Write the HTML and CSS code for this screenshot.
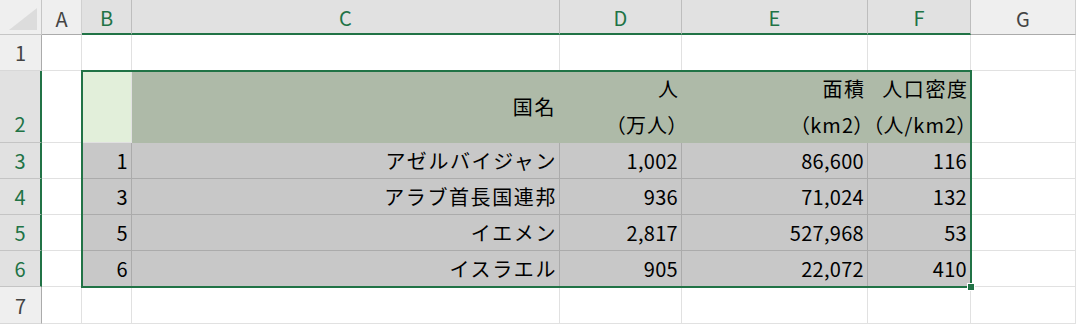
FILE: index.html
```html
<!DOCTYPE html>
<html lang="ja">
<head>
    <meta charset="UTF-8">
    <title>Sheet1</title>
    <link rel="stylesheet" href="styles.css">
</head>
<body>
    <div class="sheet">
        <!-- column headers -->
        <div class="corner"><span class="tri"></span></div>
        <div class="colhead">A</div>
        <div class="colhead on">B</div>
        <div class="colhead on">C</div>
        <div class="colhead on">D</div>
        <div class="colhead on">E</div>
        <div class="colhead on">F</div>
        <div class="colhead">G</div>

        <!-- row 1 -->
        <div class="rowhead">1</div>
        <div class="cell"></div>
        <div class="cell"></div>
        <div class="cell"></div>
        <div class="cell"></div>
        <div class="cell"></div>
        <div class="cell"></div>
        <div class="cell"></div>

        <!-- row 2 -->
        <div class="rowhead on tall">2</div>
        <div class="cell"></div>
        <div class="cell corner-cell"></div>
        <div class="cell head mid jp">国名</div>
        <div class="cell head"><span class="jp">人</span><span class="unit">（万人）</span></div>
        <div class="cell head"><span class="jp">面積</span><span class="unit">（km2）</span></div>
        <div class="cell head"><span class="jp">人口密度</span><span class="unit">（人/km2）</span></div>
        <div class="cell"></div>

        <!-- row 3 -->
        <div class="rowhead on">3</div>
        <div class="cell"></div>
        <div class="cell data">1</div>
        <div class="cell data jp">アゼルバイジャン</div>
        <div class="cell data">1,002</div>
        <div class="cell data">86,600</div>
        <div class="cell data">116</div>
        <div class="cell"></div>

        <!-- row 4 -->
        <div class="rowhead on">4</div>
        <div class="cell"></div>
        <div class="cell data">3</div>
        <div class="cell data jp">アラブ首長国連邦</div>
        <div class="cell data">936</div>
        <div class="cell data">71,024</div>
        <div class="cell data">132</div>
        <div class="cell"></div>

        <!-- row 5 -->
        <div class="rowhead on">5</div>
        <div class="cell"></div>
        <div class="cell data">5</div>
        <div class="cell data jp">イエメン</div>
        <div class="cell data">2,817</div>
        <div class="cell data">527,968</div>
        <div class="cell data">53</div>
        <div class="cell"></div>

        <!-- row 6 -->
        <div class="rowhead on">6</div>
        <div class="cell"></div>
        <div class="cell data">6</div>
        <div class="cell data jp">イスラエル</div>
        <div class="cell data">905</div>
        <div class="cell data">22,072</div>
        <div class="cell data">410</div>
        <div class="cell"></div>

        <!-- row 7 -->
        <div class="rowhead">7</div>
        <div class="cell"></div>
        <div class="cell"></div>
        <div class="cell"></div>
        <div class="cell"></div>
        <div class="cell"></div>
        <div class="cell"></div>
        <div class="cell"></div>

        <!-- selection B2:F6 -->
        <div class="selection"><span class="handle"></span></div>
    </div>
</body>
</html>
```

FILE: styles.css
```css
body {
    margin: 0;
    background: #fff;
    font-family: "Noto Sans CJK JP", "Noto Sans", sans-serif;
    font-size: 20px;
    color: #000;
}

.sheet {
    display: grid;
    grid-template-columns: 42px 40px 50px 428px 122px 186px 103px 105px;
    grid-template-rows: 35px 36px 72px 36px 36px 36px 36px 37px;
    width: 1076px;
    height: 324px;
    overflow: hidden;
    position: relative;
}

.sheet > div {
    box-sizing: border-box;
}

.corner {
    background: #efefef;
    border-right: 1px solid #c6c6c6;
    border-bottom: 1px solid #c6c6c6;
    position: relative;
}

.tri {
    position: absolute;
    right: 4px;
    bottom: 4px;
    width: 0;
    height: 0;
    border-left: 28px solid transparent;
    border-bottom: 22px solid #dcdcdc;
}

.colhead {
    background: #efefef;
    color: #444;
    display: flex;
    align-items: center;
    justify-content: center;
    border-right: 1px solid #d0d0d0;
    border-bottom: 1px solid #ababab;
    padding-top: 2px;
}

.colhead.on {
    background: #e1e1e1;
    color: #217346;
    border-right: 1px solid #bdbdbd;
    border-bottom: 2px solid #217346;
}

.rowhead {
    background: #efefef;
    color: #444;
    display: flex;
    align-items: center;
    justify-content: center;
    border-right: 1px solid #ababab;
    border-bottom: 1px solid #d8d8d8;
}

.rowhead.on {
    background: #e1e1e1;
    color: #217346;
    border-right: 2px solid #217346;
    border-bottom: 1px solid #c4c4c4;
}

.rowhead.tall {
    align-items: flex-end;
    padding-bottom: 4px;
}

.cell {
    border-right: 1px solid #e1e1e1;
    border-bottom: 1px solid #e1e1e1;
    display: flex;
    align-items: center;
    justify-content: flex-end;
    padding-right: 3px;
    white-space: nowrap;
}

.corner-cell {
    background: #e2efda;
}

.head {
    background: #aebaa8;
    border-color: #aebaa8;
    flex-direction: column;
    align-items: flex-end;
    justify-content: flex-start;
    line-height: 36px;
}

.head.mid {
    flex-direction: row;
    align-items: center;
    justify-content: flex-end;
}

.jp {
    letter-spacing: 1.6px;
}

.head .jp {
    margin-right: -1.6px;
}

.unit {
    font-feature-settings: "palt";
    letter-spacing: 1px;
    margin-right: -1px;
}

.data {
    background: #c8c8c8;
    border-color: #ababab;
    letter-spacing: 0.3px;
}

.data.jp {
    letter-spacing: 1.6px;
    padding-right: 2px;
}

/* absolutely placed grid child: takes the B2:F6 area as its box */
.selection {
    position: absolute;
    grid-column: 3 / 8;
    grid-row: 3 / 8;
    top: -1px;
    left: -1px;
    right: -1px;
    bottom: -1px;
    border: 2px solid #217346;
    box-sizing: border-box;
    pointer-events: none;
}

.handle {
    position: absolute;
    right: -5px;
    bottom: -5px;
    width: 6px;
    height: 6px;
    background: #217346;
    border: 1px solid #fff;
}
```
